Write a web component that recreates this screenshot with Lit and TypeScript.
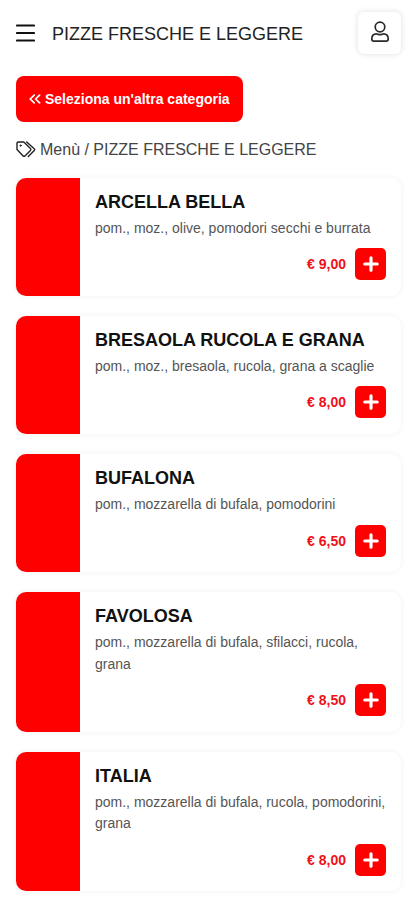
import { LitElement, html, css } from "lit";
import { customElement, property } from "lit/decorators.js";

interface Pizza {
  name: string;
  description: string;
  price: string;
}

const PIZZAS: Pizza[] = [
  { name: "ARCELLA BELLA", description: "pom., moz., olive, pomodori secchi e burrata", price: "9,00" },
  { name: "BRESAOLA RUCOLA E GRANA", description: "pom., moz., bresaola, rucola, grana a scaglie", price: "8,00" },
  { name: "BUFALONA", description: "pom., mozzarella di bufala, pomodorini", price: "6,50" },
  { name: "FAVOLOSA", description: "pom., mozzarella di bufala, sfilacci, rucola, grana", price: "8,50" },
  { name: "ITALIA", description: "pom., mozzarella di bufala, rucola, pomodorini, grana", price: "8,00" },
];

@customElement("pizza-card")
class PizzaCard extends LitElement {
  @property({ attribute: false }) pizza!: Pizza;

  static styles = css`
    :host {
      display: flex;
      border-radius: 10px;
      background: #fff;
      box-shadow: 0 0 6px rgba(0, 0, 0, 0.06);
      overflow: hidden;
    }
    .cover {
      flex: none;
      width: 64px;
      background: #f00;
    }
    .body {
      flex: 1;
      min-width: 0;
      padding: 12px 15px 15.6px 15px;
    }
    .name {
      margin: 0;
      font-size: 18px;
      line-height: 24px;
      font-weight: 700;
      white-space: nowrap;
      color: #111;
    }
    .description {
      margin: 4px 0 0;
      font-size: 14px;
      line-height: 21.2px;
      color: #555;
    }
    .buy {
      display: flex;
      justify-content: flex-end;
      align-items: center;
      gap: 9px;
      margin-top: 9.2px;
    }
    .price {
      font-size: 14px;
      line-height: 16px;
      font-weight: 700;
      color: #f0101a;
    }
    .add {
      display: flex;
      align-items: center;
      justify-content: center;
      width: 31px;
      height: 32px;
      padding: 0;
      border: 0;
      border-radius: 5px;
      background: #f00;
    }
  `;

  render() {
    return html`
      <div class="cover"></div>
      <div class="body">
        <h2 class="name">${this.pizza.name}</h2>
        <p class="description">${this.pizza.description}</p>
        <div class="buy">
          <span class="price">€ ${this.pizza.price}</span>
          <button class="add" aria-label="Aggiungi">
            <svg width="16" height="16" viewBox="0 0 16 16" stroke="#fff" stroke-width="3.2" stroke-linecap="round">
              <path d="M8 1.8v12.4M1.8 8h12.4" />
            </svg>
          </button>
        </div>
      </div>
    `;
  }
}

@customElement("app-root")
class AppRoot extends LitElement {
  static styles = css`
    :host {
      display: block;
      box-sizing: border-box;
      height: 900px;
      padding: 12px 14px 0 16px;
      overflow: hidden;
      background: #fff;
      color: #222;
      font-family: "Liberation Sans", Arial, sans-serif;
    }
    .header {
      display: flex;
      align-items: center;
      height: 42px;
    }
    .title {
      flex: 1;
      margin: 1px 0 0 17px;
      font-size: 18px;
      line-height: 24px;
      font-weight: 400;
      white-space: nowrap;
    }
    .account {
      display: flex;
      align-items: center;
      justify-content: center;
      width: 43px;
      height: 42px;
      padding: 0 0 2px;
      border: 0;
      border-radius: 6px;
      background: #fff;
      box-shadow: 0 0 6px rgba(0, 0, 0, 0.13);
    }
    .back {
      display: flex;
      align-items: center;
      box-sizing: border-box;
      width: 227px;
      height: 46px;
      margin: 22px 0 0;
      padding: 0 0 0 13px;
      gap: 4px;
      border: 0;
      border-radius: 8px;
      background: #f00;
      color: #fff;
      font: 700 14px/18px "Liberation Sans", Arial, sans-serif;
      white-space: nowrap;
    }
    .crumbs {
      display: flex;
      align-items: center;
      gap: 4px;
      height: 24px;
      margin-top: 16px;
      font-size: 16px;
      white-space: nowrap;
      color: #444;
    }
    .tags {
      margin-top: -2px;
    }
    .list {
      display: grid;
      gap: 20.3px;
      margin: 15.6px 0 0;
    }
  `;

  render() {
    return html`
      <header class="header">
        <svg width="19" height="18" viewBox="0 0 19 18" stroke="#111" stroke-width="2.1" stroke-linecap="round">
          <path d="M1 1.5h17M1 9h17M1 16.5h17" />
        </svg>
        <h1 class="title">PIZZE FRESCHE E LEGGERE</h1>
        <button class="account" aria-label="Account">
          <svg width="20" height="22" viewBox="0 0 20 22" fill="none" stroke="#2a2a2a" stroke-width="1.7">
            <circle cx="10" cy="6" r="4.8" />
            <path d="M6.4 12.8C3.4 12.8 1.8 14.8 1.8 17.8C1.8 19.4 2.5 20.2 3.8 20.2H16.2C17.5 20.2 18.2 19.4 18.2 17.8C18.2 14.8 16.6 12.8 13.6 12.8C12.5 12.8 11.8 13.7 10 13.7S7.5 12.8 6.4 12.8Z" />
          </svg>
        </button>
      </header>
      <button class="back">
        <svg width="12" height="10" viewBox="0 0 12 10" fill="none" stroke="#fff" stroke-width="1.7" stroke-linecap="round" stroke-linejoin="round">
          <path d="M5.2 1.2L1.2 5l4 3.8M10.6 1.2L6.6 5l4 3.8" />
        </svg>
        <span>Seleziona un'altra categoria</span>
      </button>
      <nav class="crumbs">
        <svg class="tags" width="20" height="17" viewBox="0 0 20 17" fill="none" stroke="#222" stroke-width="1.4" stroke-linejoin="round" stroke-linecap="round">
          <path d="M1 2.3Q1 1 2.3 1H7.8L14.4 7.6Q15.3 8.5 14.4 9.4L9 14.9Q8 15.8 7.1 14.9L1 8.6Z" />
          <path d="M10.7 1L18.2 7.7Q19.2 8.6 18.3 9.5L12.3 15.5" />
          <circle cx="4.6" cy="4.6" r="0.7" fill="#222" stroke-width="0.8" />
        </svg>
        <span>Menù / PIZZE FRESCHE E LEGGERE</span>
      </nav>
      <main class="list">${PIZZAS.map((pizza) => html`<pizza-card .pizza=${pizza}></pizza-card>`)}</main>
    `;
  }
}
